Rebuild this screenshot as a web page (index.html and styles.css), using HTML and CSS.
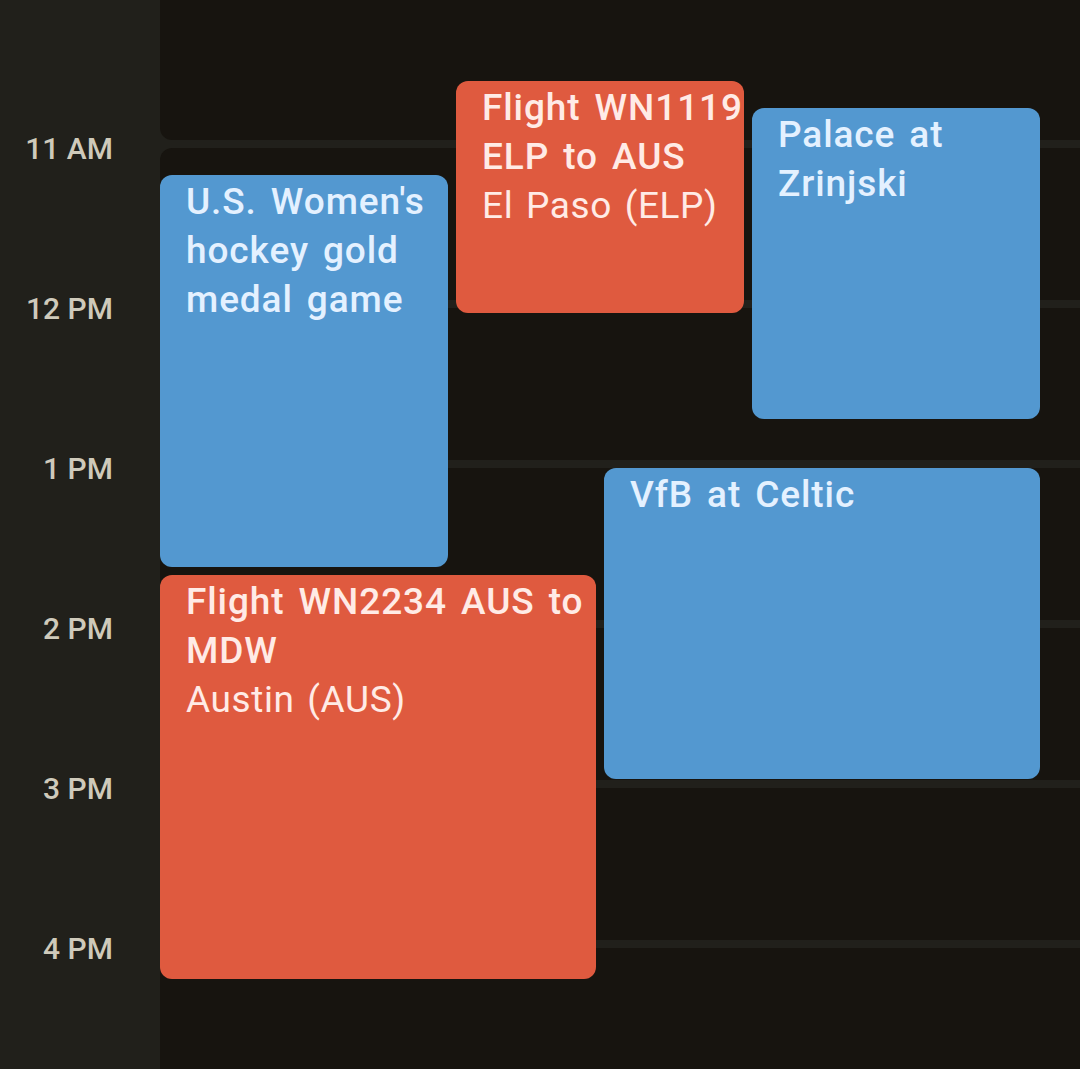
FILE: index.html
```html
<!DOCTYPE html>
<html>
<head>
    <meta charset="utf-8">
    <title>Day view</title>
    <link rel="stylesheet" href="styles.css">
</head>
<body>
    <div class="day">
        <!-- hour labels, scrolled so 11 AM sits near the top -->
        <div class="gutter">
            <div class="hourLabel">10 AM</div>
            <div class="hourLabel">11 AM</div>
            <div class="hourLabel">12 PM</div>
            <div class="hourLabel">1 PM</div>
            <div class="hourLabel">2 PM</div>
            <div class="hourLabel">3 PM</div>
            <div class="hourLabel">4 PM</div>
        </div>

        <div class="column">
            <div class="cell"></div>
            <div class="cell"></div>
            <div class="cell"></div>
            <div class="cell"></div>
            <div class="cell"></div>
            <div class="cell"></div>
            <div class="cell"></div>
            <div class="cell"></div>

            <div class="event blueEvent" style="top: 187px; height: 392px; left: 0; width: 288px;">
                <div class="eventTitle">U.S. Women's hockey gold medal game</div>
            </div>
            <div class="event redEvent" style="top: 93px; height: 232px; left: 296px; width: 288px;">
                <div class="eventTitle">Flight WN1119 ELP to AUS</div>
                <div class="eventPlace">El Paso (ELP)</div>
            </div>
            <div class="event blueEvent" style="top: 120px; height: 311px; left: 592px; width: 288px;">
                <div class="eventTitle">Palace at Zrinjski</div>
            </div>
            <div class="event blueEvent" style="top: 480px; height: 311px; left: 444px; width: 436px;">
                <div class="eventTitle">VfB at Celtic</div>
            </div>
            <div class="event redEvent" style="top: 587px; height: 404px; left: 0; width: 436px;">
                <div class="eventTitle">Flight WN2234 AUS to MDW</div>
                <div class="eventPlace">Austin (AUS)</div>
            </div>
        </div>
    </div>
</body>
</html>
```

FILE: styles.css
```css
html, body {
    margin: 0;
    height: 100%;
    background-color: #21201b;
    font-family: Roboto, "Liberation Sans", sans-serif;
}

.day {
    display: grid;
    grid-template-columns: 160px 1fr;
    height: 100vh;
    overflow: hidden;
}

.gutter {
    display: flex;
    flex-direction: column;
    margin-top: -29px;
}

.hourLabel {
    flex: 0 0 160px;
    padding-right: 47px;
    text-align: right;
    font-size: 30px;
    font-weight: 500;
    line-height: 36px;
    color: #cfcabb;
}

.column {
    position: relative;
    display: flex;
    flex-direction: column;
    gap: 8px;
    margin-top: -12px;
}

.cell {
    flex: 0 0 152px;
    background-color: #17140f;
    border-radius: 12px 0 0 12px;
}

.event {
    position: absolute;
    box-sizing: border-box;
    padding: 2px 0 0 26px;
    border-radius: 12px;
    overflow: hidden;
    font-size: 37px;
    line-height: 49px;
}

.blueEvent {
    background-color: #5398d0;
    color: #e4f1ff;
}

.redEvent {
    background-color: #df5a3f;
    color: #ffebe6;
}

.eventTitle {
    font-weight: 500;
    letter-spacing: 0.9px;
    word-spacing: 4px;
}

.eventPlace {
    font-weight: 400;
    letter-spacing: 0.6px;
    word-spacing: 3px;
}
```
